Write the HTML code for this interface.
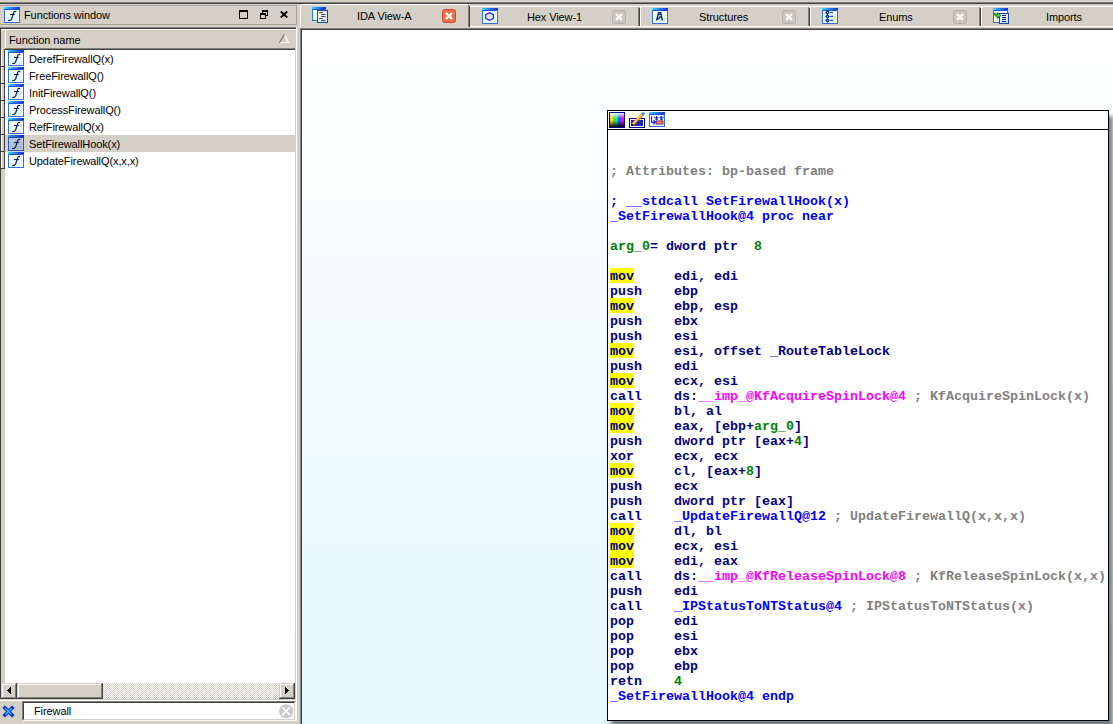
<!DOCTYPE html>
<html><head><meta charset="utf-8">
<style>
*{margin:0;padding:0;box-sizing:border-box}
html,body{width:1113px;height:724px;overflow:hidden;background:#d4d0c8;font-family:"Liberation Sans",sans-serif;font-size:11px;color:#000}
.a{position:absolute}
.ui{font-family:"Liberation Sans",sans-serif;font-size:11px;white-space:nowrap;line-height:13px;letter-spacing:-0.1px}
#code{position:absolute;left:610px;top:0;font-family:"Liberation Mono",monospace;font-weight:bold;font-size:13.333px;line-height:15px;white-space:pre;color:#000080}
#code div{position:absolute;left:0;height:15px;white-space:pre}
.btn{box-shadow:inset -1px -1px #404040,inset 1px 1px #d4d0c8,inset -2px -2px #808080,inset 2px 2px #fff;background:#d4d0c8}
.g{color:#808080}.b{color:#0000ff}.gr{color:#008000}.m{color:#ff00ff}
#code i.yb{position:absolute;left:0;width:24px;height:15px;background:#ffff00}
</style></head><body>
<svg width="0" height="0" style="position:absolute">
<defs>
<linearGradient id="fbar" x1="0" y1="0" x2="1" y2="0"><stop offset="0" stop-color="#38d8ff"/><stop offset="0.5" stop-color="#2a78ec"/><stop offset="1" stop-color="#1030d0"/></linearGradient>
<linearGradient id="fbody" x1="0" y1="0" x2="1" y2="1"><stop offset="0" stop-color="#ffffff"/><stop offset="1" stop-color="#d0f6ff"/></linearGradient>
<symbol id="wfr" viewBox="0 0 16 16">
<rect x="0" y="0" width="16" height="16" fill="#2f6fe4" shape-rendering="crispEdges"/>
<rect x="0" y="0" width="16" height="2" fill="url(#fbar)" shape-rendering="crispEdges"/>
<rect x="1" y="2" width="14" height="1" fill="#1f4fe0" shape-rendering="crispEdges"/>
<rect x="1" y="3" width="14" height="12" fill="#fff" shape-rendering="crispEdges"/>
<rect x="2" y="4" width="12" height="10" fill="url(#fbody)" shape-rendering="crispEdges"/>
</symbol>
<linearGradient id="doc" x1="0" y1="0" x2="1" y2="1"><stop offset="0" stop-color="#ffffff"/><stop offset="1" stop-color="#c8e0f8"/></linearGradient>
<symbol id="fic" viewBox="0 0 16 16">
<rect x="0" y="0" width="16" height="16" fill="#2f6fe4" shape-rendering="crispEdges"/>
<rect x="0" y="0" width="16" height="2" fill="url(#fbar)" shape-rendering="crispEdges"/>
<rect x="1" y="2" width="14" height="1" fill="#1f4fe0" shape-rendering="crispEdges"/>
<rect x="1" y="3" width="14" height="12" fill="#fff" shape-rendering="crispEdges"/>
<rect x="2" y="4" width="12" height="10" fill="url(#fbody)" shape-rendering="crispEdges"/>
<path d="M12.2,4.6 C10.9,4.1 10.1,4.6 9.7,5.8 L7.5,12.3 C7.1,13.4 6.3,13.6 4.2,13.6 M6.1,7.5 L10.9,7.5" stroke="#0c1a44" stroke-width="1.15" fill="none"/>
</symbol>
<symbol id="cls" viewBox="0 0 14 14"><rect x="0.5" y="0.5" width="13" height="13" rx="2" fill="#cac6be" stroke="#b4b0a8"/><path d="M4,4 L10,10 M10,4 L4,10" stroke="#fff" stroke-width="2.2"/></symbol>
</defs></svg>
<!-- top dark line -->
<div class="a" style="left:0;top:2px;width:1113px;height:1px;background:#808080"></div>
<div class="a" style="left:0;top:3px;width:1113px;height:1px;background:#404040"></div>

<!-- ===== LEFT PANEL ===== -->
<!-- title box -->
<div class="a" style="left:-1px;top:5px;width:298px;height:20px;border:1px solid #a8a49c;border-left:none"></div>
<div class="a ui" style="left:24px;top:9px">Functions window</div>
<svg class="a" style="left:4px;top:7px" width="16" height="16"><use href="#fic"/></svg>
<svg class="a" style="left:239px;top:10px" width="9" height="9" shape-rendering="crispEdges"><rect x="0" y="0" width="9" height="9" fill="#000"/><rect x="1" y="2" width="7" height="6" fill="#d4d0c8"/></svg>
<svg class="a" style="left:260px;top:10px" width="8" height="9" shape-rendering="crispEdges"><rect x="2" y="0" width="6" height="6" fill="#000"/><rect x="3" y="2" width="4" height="3" fill="#d4d0c8"/><rect x="0" y="3" width="6" height="6" fill="#000"/><rect x="1" y="5" width="4" height="3" fill="#d4d0c8"/></svg>
<svg class="a" style="left:280px;top:11px" width="8" height="7"><path d="M0.8,0.5 L7.2,6.5 M7.2,0.5 L0.8,6.5" stroke="#000" stroke-width="1.9"/></svg>
<svg class="a" style="left:278px;top:33px" width="12" height="11"><path d="M6.6,9.3 L10.3,9.3 L6.6,1.6" stroke="#fff" stroke-width="1.3" fill="none"/><path d="M1.4,9.6 L6.4,9.6" stroke="#fff" stroke-width="1.2"/><path d="M1.3,9.6 L6.6,1.4" stroke="#707070" stroke-width="1.1" fill="none"/></svg>


<!-- list frame -->
<div class="a" style="left:0;top:27px;width:296px;height:1px;background:#808080"></div>
<div class="a" style="left:0;top:28px;width:296px;height:1px;background:#404040"></div>
<div class="a" style="left:0;top:28px;width:1px;height:671px;background:#404040"></div>
<div class="a" style="left:296px;top:27px;width:1px;height:694px;background:#fff"></div>
<!-- header -->
<div class="a" style="left:1px;top:29px;width:295px;height:1px;background:#fff"></div>
<div class="a" style="left:5px;top:29px;width:1px;height:20px;background:#fff"></div>
<div class="a" style="left:5px;top:48px;width:290px;height:1px;background:#808080"></div>
<div class="a" style="left:4px;top:49px;width:291px;height:1px;background:#404040"></div>
<div class="a ui" style="left:9px;top:34px">Function name</div>
<!-- list white -->
<div class="a" style="left:5px;top:50px;width:290px;height:633px;background:#fff"></div>
<div class="a" style="left:1px;top:50px;width:1px;height:16px;background:#fff"></div>
<div class="a" style="left:0;top:66px;width:5px;height:1px;background:#404040"></div>
<div class="a" style="left:4px;top:50px;width:1px;height:17px;background:#404040"></div>
<svg class="a fi" style="left:8px;top:50px" width="16" height="16"><use href="#fic"/></svg>
<div class="a ui" style="left:29px;top:53px">DerefFirewallQ(x)</div>
<div class="a" style="left:1px;top:67px;width:1px;height:16px;background:#fff"></div>
<div class="a" style="left:0;top:83px;width:5px;height:1px;background:#404040"></div>
<div class="a" style="left:4px;top:67px;width:1px;height:17px;background:#404040"></div>
<svg class="a fi" style="left:8px;top:67px" width="16" height="16"><use href="#fic"/></svg>
<div class="a ui" style="left:29px;top:70px">FreeFirewallQ()</div>
<div class="a" style="left:1px;top:84px;width:1px;height:16px;background:#fff"></div>
<div class="a" style="left:0;top:100px;width:5px;height:1px;background:#404040"></div>
<div class="a" style="left:4px;top:84px;width:1px;height:17px;background:#404040"></div>
<svg class="a fi" style="left:8px;top:84px" width="16" height="16"><use href="#fic"/></svg>
<div class="a ui" style="left:29px;top:87px">InitFirewallQ()</div>
<div class="a" style="left:1px;top:101px;width:1px;height:16px;background:#fff"></div>
<div class="a" style="left:0;top:117px;width:5px;height:1px;background:#404040"></div>
<div class="a" style="left:4px;top:101px;width:1px;height:17px;background:#404040"></div>
<svg class="a fi" style="left:8px;top:101px" width="16" height="16"><use href="#fic"/></svg>
<div class="a ui" style="left:29px;top:104px">ProcessFirewallQ()</div>
<div class="a" style="left:1px;top:118px;width:1px;height:16px;background:#fff"></div>
<div class="a" style="left:0;top:134px;width:5px;height:1px;background:#404040"></div>
<div class="a" style="left:4px;top:118px;width:1px;height:17px;background:#404040"></div>
<svg class="a fi" style="left:8px;top:118px" width="16" height="16"><use href="#fic"/></svg>
<div class="a ui" style="left:29px;top:121px">RefFirewallQ(x)</div>
<div class="a" style="left:5px;top:135px;width:290px;height:17px;background:#d4d0c8"></div>
<div class="a" style="left:1px;top:135px;width:1px;height:16px;background:#fff"></div>
<div class="a" style="left:0;top:151px;width:5px;height:1px;background:#404040"></div>
<div class="a" style="left:4px;top:135px;width:1px;height:17px;background:#404040"></div>
<div class="a" style="left:8px;top:135px;width:16px;height:16px;background:rgba(10,36,106,.26);z-index:2"></div>
<svg class="a fi sel" style="left:8px;top:135px" width="16" height="16"><use href="#fic"/></svg>
<div class="a ui" style="left:29px;top:138px">SetFirewallHook(x)</div>
<div class="a" style="left:1px;top:152px;width:1px;height:16px;background:#fff"></div>
<div class="a" style="left:0;top:168px;width:5px;height:1px;background:#404040"></div>
<div class="a" style="left:4px;top:152px;width:1px;height:17px;background:#404040"></div>
<svg class="a fi" style="left:8px;top:152px" width="16" height="16"><use href="#fic"/></svg>
<div class="a ui" style="left:29px;top:155px">UpdateFirewallQ(x,x,x)</div>

<!-- scrollbar -->
<div class="a" style="left:1px;top:683px;width:294px;height:16px;background-color:#fff;background-image:conic-gradient(#d4d0c8 25%,#fff 0 50%,#d4d0c8 0 75%,#fff 0);background-size:2px 2px"></div>
<div class="a btn" style="left:1px;top:683px;width:16px;height:16px"></div>
<svg class="a" style="left:7px;top:687px" width="4" height="7" shape-rendering="crispEdges"><path d="M4,0 L0,3.5 L4,7Z" fill="#000"/></svg>
<div class="a btn" style="left:17px;top:683px;width:86px;height:16px"></div>
<div class="a btn" style="left:279px;top:683px;width:16px;height:16px"></div>
<svg class="a" style="left:285px;top:687px" width="4" height="7" shape-rendering="crispEdges"><path d="M0,0 L4,3.5 L0,7Z" fill="#000"/></svg>
<div class="a" style="left:0;top:700px;width:297px;height:1px;background:#fff"></div>
<!-- filter -->
<svg class="a" style="left:2px;top:705px" width="13" height="13"><path d="M3,3 L10,10 M10,3 L3,10" stroke="#0a28d8" stroke-width="3.6" stroke-linecap="square"/><path d="M3,3 L9.5,9.5 M9.8,3.2 L3.2,9.8" stroke="#3cc8f8" stroke-width="1.3"/></svg>
<div class="a" style="left:22px;top:701px;width:274px;height:20px;border-top:1px solid #808080;border-left:1px solid #808080;border-right:1px solid #fff;border-bottom:1px solid #fff"></div>
<div class="a" style="left:23px;top:702px;width:272px;height:18px;border-top:1px solid #404040;border-left:1px solid #404040;border-right:1px solid #d4d0c8;border-bottom:1px solid #d4d0c8;background:#fff"></div>
<div class="a ui" style="left:34px;top:705px">Firewall</div>
<svg class="a" style="left:279px;top:704px" width="15" height="15"><circle cx="7.2" cy="7.2" r="7" fill="#c8c8c8"/><path d="M3.3,3.3 L11.1,11.1 M11.1,3.3 L3.3,11.1" stroke="#fff" stroke-width="1.6"/></svg>

<!-- ===== TABS ===== -->

<!-- tab bar lines -->
<div class="a" style="left:470px;top:26px;width:643px;height:1px;background:#fff"></div>
<!-- active tab -->
<div class="a" style="left:302px;top:4px;width:166px;height:1px;background:#fff"></div>
<div class="a" style="left:301px;top:5px;width:1px;height:1px;background:#fff"></div>
<div class="a" style="left:300px;top:6px;width:1px;height:22px;background:#fff"></div>
<div class="a" style="left:468px;top:5px;width:1px;height:22px;background:#808080"></div>
<div class="a" style="left:469px;top:6px;width:1px;height:21px;background:#404040"></div>
<!-- inactive tabs top -->
<div class="a" style="left:470px;top:6px;width:643px;height:1px;background:#fff"></div>
<div class="a" style="left:638px;top:7px;width:1px;height:19px;background:#808080"></div>
<div class="a" style="left:639px;top:8px;width:1px;height:18px;background:#404040"></div>
<div class="a" style="left:639px;top:6px;width:1px;height:1px;background:#d4d0c8"></div>
<div class="a" style="left:640px;top:7px;width:1px;height:20px;background:#fff"></div>
<div class="a" style="left:808px;top:7px;width:1px;height:19px;background:#808080"></div>
<div class="a" style="left:809px;top:8px;width:1px;height:18px;background:#404040"></div>
<div class="a" style="left:809px;top:6px;width:1px;height:1px;background:#d4d0c8"></div>
<div class="a" style="left:810px;top:7px;width:1px;height:20px;background:#fff"></div>
<div class="a" style="left:979px;top:7px;width:1px;height:19px;background:#808080"></div>
<div class="a" style="left:980px;top:8px;width:1px;height:18px;background:#404040"></div>
<div class="a" style="left:980px;top:6px;width:1px;height:1px;background:#d4d0c8"></div>
<div class="a" style="left:981px;top:7px;width:1px;height:20px;background:#fff"></div>
<!-- tab texts -->
<div class="a ui" style="left:357px;top:10px">IDA View-A</div>
<div class="a ui" style="left:527px;top:11px">Hex View-1</div>
<div class="a ui" style="left:699px;top:11px">Structures</div>
<div class="a ui" style="left:879px;top:11px">Enums</div>
<div class="a ui" style="left:1046px;top:11px">Imports</div>
<!-- close buttons -->
<svg class="a" style="left:442px;top:9px" width="14" height="14"><rect x="0.5" y="0.5" width="13" height="13" rx="2" fill="#e3744c" stroke="#e0402c"/><path d="M4,4 L10,10 M10,4 L4,10" stroke="#fff" stroke-width="2.2"/></svg>
<svg class="a cb" style="left:612px;top:10px" width="14" height="14"><use href="#cls"/></svg>
<svg class="a cb" style="left:782px;top:10px" width="14" height="14"><use href="#cls"/></svg>
<svg class="a cb" style="left:953px;top:10px" width="14" height="14"><use href="#cls"/></svg>
<!-- tab icons -->
<svg class="a" style="left:312px;top:7px" width="16" height="16" viewBox="0 0 16 16">
<svg x="0" y="0" width="14" height="14" viewBox="0 0 16 16"><use href="#wfr"/></svg>
<rect x="5.5" y="3.5" width="10" height="12" fill="url(#doc)" stroke="#1c4a90"/>
<path d="M7,5.5 H11 M9,7.5 H13.5 M9,9.5 H13.5 M7,11.5 H11 M9,13.5 H13.5" stroke="#505050" stroke-width="1"/>
</svg>
<svg class="a" style="left:482px;top:8px" width="16" height="16" viewBox="0 0 16 16"><use href="#wfr"/>
<path d="M7.5,4.6 L11.3,6.6 L11.3,10.5 L7.5,12.4 L3.7,10.5 L3.7,6.6Z" fill="#dce8f8" stroke="#2222ee" stroke-width="1.2"/></svg>
<svg class="a" style="left:652px;top:8px" width="16" height="16" viewBox="0 0 16 16"><use href="#wfr"/>
<path d="M6.3,4.6 H8.8 V6.3 H6.3Z" fill="none" stroke="#0c2a70" stroke-width="1.2"/>
<path d="M6.3,6 L4.6,12.5 M8.8,6 L10.4,12.5 M5.5,11.5 L9.2,8" stroke="#0c2a70" stroke-width="1.4" fill="none"/></svg>
<svg class="a" style="left:822px;top:8px" width="16" height="16" viewBox="0 0 16 16"><use href="#wfr"/>
<g fill="#20e8ff" stroke="#0a2a90" stroke-width="1.1"><path d="M5.5,2.9 L7.1,4.5 L5.5,6.1 L3.9,4.5Z"/><path d="M5.5,6.8 L7.1,8.4 L5.5,10 L3.9,8.4Z"/><path d="M5.5,10.8 L7.1,12.4 L5.5,14 L3.9,12.4Z"/></g>
<path d="M8.2,4.5 H11 M8.2,8.4 H11 M8.2,12.4 H11" stroke="#1050d0" stroke-width="1.2"/></svg>
<svg class="a" style="left:993px;top:8px" width="16" height="16" viewBox="0 0 16 16">
<svg x="0" y="0" width="15" height="15" viewBox="0 0 16 16"><use href="#wfr"/></svg>
<rect x="6.5" y="5.5" width="9" height="10" fill="url(#doc)" stroke="#1c4a90"/>
<path d="M9,7.4 H13 M9,9.5 H13 M9,11.4 H13 M9,13.5 H13" stroke="#0a10c0" stroke-width="1"/>
<path d="M1.2,5 L4.3,6.6 L4.6,4.6 L7.9,7.6 L4.6,10.4 L4.3,8.6 L2,7.6Z" fill="#40e040" stroke="#086010" stroke-width="0.9" stroke-linejoin="round"/></svg>

<!-- ===== IDA VIEW ===== -->
<div class="a" style="left:300px;top:28px;width:813px;height:1px;background:#808080"></div>
<div class="a" style="left:300px;top:28px;width:1px;height:696px;background:#808080"></div>
<div class="a" style="left:301px;top:29px;width:812px;height:1px;background:#404040"></div>
<div class="a" style="left:301px;top:29px;width:1px;height:695px;background:#404040"></div>
<div class="a" style="left:302px;top:30px;width:811px;height:694px;background:linear-gradient(#ffffff,#e4f8fe)"></div>

<!-- node -->
<div class="a" style="left:607px;top:110px;width:502px;height:611px;border:1px solid #000;background:#fff;box-shadow:4px 6px 4px rgba(40,50,55,.6)"></div>
<div class="a" style="left:607px;top:129px;width:502px;height:1px;background:#000"></div>

<!-- node header icons -->
<div class="a" style="left:609px;top:112px;width:16px;height:16px;border:1px solid #000090;background:linear-gradient(rgba(255,255,255,.9),rgba(255,255,255,0) 40%,rgba(0,0,0,0) 55%,rgba(0,0,0,.95)),linear-gradient(90deg,#ffa040,#ffe000 12%,#30e030 30%,#20e0c0 48%,#2050ff 66%,#c020ff 84%,#ff1080)"></div>
<svg class="a" style="left:629px;top:112px" width="16" height="16" viewBox="0 0 16 16">
<rect x="0.5" y="6.5" width="15" height="9" fill="#fff" stroke="#000090" shape-rendering="crispEdges"/>
<rect x="2" y="8" width="12" height="6" fill="#1c2cb8" shape-rendering="crispEdges"/>
<path d="M3.6,12.8 L13.6,2.2" stroke="#e07820" stroke-width="3" stroke-linecap="butt"/>
<path d="M3.2,12.4 L13.2,1.8" stroke="#ffd040" stroke-width="1.5"/>
<path d="M4,12.3 L13,2.7" stroke="#fff" stroke-width=".6" stroke-dasharray="1,1"/>
<circle cx="14.2" cy="1.8" r="1.8" fill="#40a0d0"/>
<path d="M2.6,13.8 L4,12.2" stroke="#000" stroke-width="1.5"/>
</svg>
<svg class="a" style="left:649px;top:112px" width="16" height="16" viewBox="0 0 16 16"><svg x="0" y="0" width="16" height="15" viewBox="0 0 16 16" preserveAspectRatio="none"><use href="#wfr"/></svg>
<path d="M2.5,4.2 V10.3 H6.8 M4.5,8.3 L6.6,10.3 L4.5,12.3" stroke="#2020f0" stroke-width="1.2" fill="none"/>
<path d="M5,5.3 H15" stroke="#2020f0" stroke-width="1.1" stroke-dasharray="1.6,1.2"/>
<path d="M7.5,4 V7.8 M6.2,6.5 L7.5,7.9 L8.8,6.5 M12.4,4 V7.8 M11.1,6.5 L12.4,7.9 L13.7,6.5" stroke="#2020f0" stroke-width="1.1" fill="none"/>
<rect x="7.3" y="9" width="6.7" height="3" fill="#ffa030" stroke="#901868" stroke-width="1"/>
</svg>
<div id="code">
<div style="top:164px"><span class="g">; Attributes: bp-based frame</span></div>
<div style="top:194px"><span class="b">; __stdcall SetFirewallHook(x)</span></div>
<div style="top:209px"><span class="b">_SetFirewallHook@4 proc near</span></div>
<div style="top:239px"><span class="gr">arg_0</span>= dword ptr  <span class="gr">8</span></div>
<i class="yb" style="top:268px"></i>
<div style="top:269px">mov     edi, edi</div>
<div style="top:284px">push    ebp</div>
<i class="yb" style="top:298px"></i>
<div style="top:299px">mov     ebp, esp</div>
<div style="top:314px">push    ebx</div>
<div style="top:329px">push    esi</div>
<i class="yb" style="top:343px"></i>
<div style="top:344px">mov     esi, offset _RouteTableLock</div>
<div style="top:359px">push    edi</div>
<i class="yb" style="top:373px"></i>
<div style="top:374px">mov     ecx, esi</div>
<div style="top:389px">call    ds:<span class="m">__imp_@KfAcquireSpinLock@4</span> <span class="g">; KfAcquireSpinLock(x)</span></div>
<i class="yb" style="top:403px"></i>
<div style="top:404px">mov     bl, al</div>
<i class="yb" style="top:418px"></i>
<div style="top:419px">mov     eax, [ebp+<span class="gr">arg_0</span>]</div>
<div style="top:434px">push    dword ptr [eax+<span class="gr">4</span>]</div>
<div style="top:449px">xor     ecx, ecx</div>
<i class="yb" style="top:463px"></i>
<div style="top:464px">mov     cl, [eax+<span class="gr">8</span>]</div>
<div style="top:479px">push    ecx</div>
<div style="top:494px">push    dword ptr [eax]</div>
<div style="top:509px">call    <span class="b">_UpdateFirewallQ@12</span> <span class="g">; UpdateFirewallQ(x,x,x)</span></div>
<i class="yb" style="top:523px"></i>
<div style="top:524px">mov     dl, bl</div>
<i class="yb" style="top:538px"></i>
<div style="top:539px">mov     ecx, esi</div>
<i class="yb" style="top:553px"></i>
<div style="top:554px">mov     edi, eax</div>
<div style="top:569px">call    ds:<span class="m">__imp_@KfReleaseSpinLock@8</span> <span class="g">; KfReleaseSpinLock(x,x)</span></div>
<div style="top:584px">push    edi</div>
<div style="top:599px">call    <span class="b">_IPStatusToNTStatus@4</span> <span class="g">; IPStatusToNTStatus(x)</span></div>
<div style="top:614px">pop     edi</div>
<div style="top:629px">pop     esi</div>
<div style="top:644px">pop     ebx</div>
<div style="top:659px">pop     ebp</div>
<div style="top:674px">retn    <span class="gr">4</span></div>
<div style="top:689px"><span class="b">_SetFirewallHook@4 endp</span></div>
</div>
</body></html>
